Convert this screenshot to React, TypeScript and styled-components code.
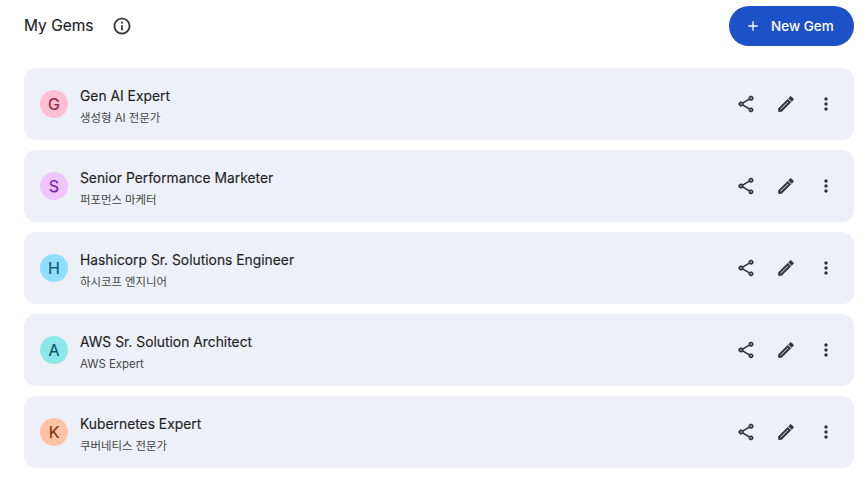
import { FC } from "react";
import styled, { createGlobalStyle } from "styled-components";

const gems = [
  { letter: "G", name: "Gen AI Expert", desc: "생성형 AI 전문가", bg: "#ffbfd2", fg: "#8c2a52" },
  { letter: "S", name: "Senior Performance Marketer", desc: "퍼포먼스 마케터", bg: "#efc4ff", fg: "#7a1fb0" },
  { letter: "H", name: "Hashicorp Sr. Solutions Engineer", desc: "하시코프 엔지니어", bg: "#8fdfff", fg: "#0b5a80" },
  { letter: "A", name: "AWS Sr. Solution Architect", desc: "AWS Expert", bg: "#8ce7e9", fg: "#0b5560" },
  { letter: "K", name: "Kubernetes Expert", desc: "쿠버네티스 전문가", bg: "#ffc3a6", fg: "#80330f" },
];

const Icon: FC<{ d: string; size?: number; bold?: number }> = ({ d, size = 20, bold = 0 }) => (
  <svg width={size} height={size} viewBox="0 0 24 24" fill="currentColor" stroke="currentColor" strokeWidth={bold}>
    <path d={d} />
  </svg>
);

const shareIcon =
  "M18 16.08c-.76 0-1.44.3-1.96.77L8.91 12.7c.05-.23.09-.46.09-.7s-.04-.47-.09-.7l7.05-4.11c.54.5 1.25.81 2.04.81 1.66 0 3-1.34 3-3s-1.34-3-3-3-3 1.34-3 3c0 .24.04.47.09.7L8.04 9.81C7.5 9.31 6.79 9 6 9c-1.66 0-3 1.34-3 3s1.34 3 3 3c.79 0 1.5-.31 2.04-.81l7.12 4.16c-.05.21-.08.43-.08.65 0 1.61 1.31 2.92 2.92 2.92 1.61 0 2.92-1.31 2.92-2.92s-1.31-2.92-2.92-2.92zM18 4c.55 0 1 .45 1 1s-.45 1-1 1-1-.45-1-1 .45-1 1-1zM6 13c-.55 0-1-.45-1-1s.45-1 1-1 1 .45 1 1-.45 1-1 1zm12 7.02c-.55 0-1-.45-1-1s.45-1 1-1 1 .45 1 1-.45 1-1 1z";
const editIcon =
  "M14.06 9.02l.92.92L5.92 19H5v-.92l9.06-9.06M17.66 3c-.25 0-.51.1-.7.29l-1.83 1.83 3.75 3.75 1.83-1.83c.39-.39.39-1.02 0-1.41l-2.34-2.34c-.2-.2-.45-.29-.71-.29zm-3.6 3.19L3 17.25V21h3.75L17.81 9.94l-3.75-3.75z";
const moreIcon =
  "M12 8c1.1 0 2-.9 2-2s-.9-2-2-2-2 .9-2 2 .9 2 2 2zm0 2c-1.1 0-2 .9-2 2s.9 2 2 2 2-.9 2-2-.9-2-2-2zm0 6c-1.1 0-2 .9-2 2s.9 2 2 2 2-.9 2-2-.9-2-2-2z";
const infoIcon =
  "M11 7h2v2h-2zm0 4h2v6h-2zm1-9C6.48 2 2 6.48 2 12s4.48 10 10 10 10-4.48 10-10S17.52 2 12 2zm0 18c-4.41 0-8-3.59-8-8s3.59-8 8-8 8 3.59 8 8-3.59 8-8 8z";
const plusIcon = "M19 13h-6v6h-2v-6H5v-2h6V5h2v6h6v2z";

const App: FC = () => (
  <>
    <Global />
    <Page>
      <Header>
        <TitleGroup>
          <Title>My Gems</Title>
          <InfoButton>
            <Icon d={infoIcon} bold={0.2} />
          </InfoButton>
        </TitleGroup>
        <NewButton>
          <Icon d={plusIcon} size={16} />
          New Gem
        </NewButton>
      </Header>
      <List>
        {gems.map((g) => (
          <Row key={g.letter}>
            <Avatar $bg={g.bg} $fg={g.fg}>{g.letter}</Avatar>
            <Texts>
              <Name>{g.name}</Name>
              <Desc>{g.desc}</Desc>
            </Texts>
            <Actions>
              <ActionButton><Icon d={shareIcon} bold={0.15} /></ActionButton>
              <ActionButton><Icon d={editIcon} bold={0.7} /></ActionButton>
              <ActionButton><Icon d={moreIcon} /></ActionButton>
            </Actions>
          </Row>
        ))}
      </List>
    </Page>
  </>
);

const Global = createGlobalStyle`
  html, body {
    margin: 0;
    background: #fff;
  }
  body {
    font-family: Inter, "Noto Sans CJK KR", sans-serif;
    color: #1f1f1f;
  }
`;

const Page = styled.div`
  width: 868px;
  height: 477px;
  box-sizing: border-box;
  padding: 6px 14px 0 24px;
  overflow: hidden;
`;

const Header = styled.div`
  display: flex;
  align-items: center;
  justify-content: space-between;
  height: 40px;
  margin-bottom: 22px;
`;

const TitleGroup = styled.div`
  display: flex;
  align-items: center;
  gap: 18px;
`;

const Title = styled.h1`
  margin: 0;
  font-size: 15.5px;
  font-weight: 400;
  line-height: 24px;
  color: #1f1f1f;
  -webkit-text-stroke: 0.15px #1f1f1f;
`;

const InfoButton = styled.span`
  display: flex;
  color: #333;
`;

const NewButton = styled.button`
  display: flex;
  align-items: center;
  gap: 10px;
  height: 40px;
  width: 125px;
  box-sizing: border-box;
  padding: 0 0 0 16px;
  border: 0;
  border-radius: 20px;
  background: #1c51c7;
  color: #fff;
  font-family: inherit;
  font-size: 13.5px;
  font-weight: 500;
`;

const List = styled.div`
  display: flex;
  flex-direction: column;
  gap: 10px;
`;

const Row = styled.div`
  display: flex;
  align-items: center;
  height: 72px;
  padding: 0 16px;
  border-radius: 12px;
  background: #edf0f7;
`;

const Avatar = styled.div<{ $bg: string; $fg: string }>`
  display: flex;
  align-items: center;
  justify-content: center;
  flex: none;
  width: 28px;
  height: 28px;
  margin-right: 12px;
  border-radius: 50%;
  background: ${(p) => p.$bg};
  color: ${(p) => p.$fg};
  font-size: 16px;
  -webkit-text-stroke: 0.2px ${(p) => p.$fg};
`;

const Texts = styled.div`
  display: flex;
  flex-direction: column;
  gap: 4px;
  flex: 1;
  padding-top: 3px;
`;

const Name = styled.div`
  font-size: 13.8px;
  line-height: 20px;
  font-weight: 400;
  letter-spacing: 0.02px;
  color: #1f1f1f;
  -webkit-text-stroke: 0.15px #1f1f1f;
`;

const Desc = styled.div`
  font-size: 11.4px;
  line-height: 16px;
  color: #444746;
`;

const Actions = styled.div`
  display: flex;
  align-items: center;
  gap: 20px;
  margin-right: 2px;
`;

const ActionButton = styled.span`
  display: flex;
  width: 20px;
  height: 20px;
  color: #333;
`;

export default App;
